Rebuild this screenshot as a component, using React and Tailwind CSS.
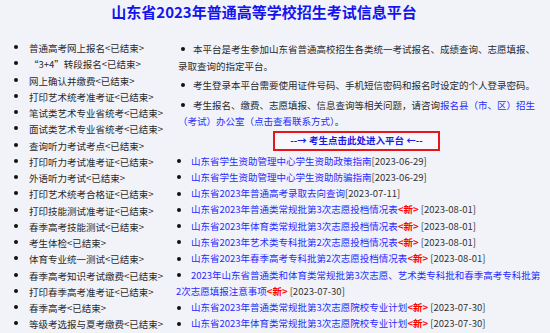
const leftItems = [
  '普通高考网上报名',
  '“3+4”转段报名',
  '网上确认并缴费',
  '打印艺术统考准考证',
  '笔试类艺术专业省统考',
  '面试类艺术专业省统考',
  '查询听力考试考点',
  '打印听力考试准考证',
  '外语听力考试',
  '打印艺术统考合格证',
  '打印技能测试准考证',
  '春季高考技能测试',
  '考生体检',
  '体育专业统一测试',
  '春季高考知识考试缴费',
  '打印春季高考准考证',
  '春季高考',
  '等级考选报与夏考缴费',
]

const news = [
  { title: '山东省学生资助管理中心学生资助政策指南', date: '2023-06-29' },
  { title: '山东省学生资助管理中心学生资助防骗指南', date: '2023-06-29' },
  { title: '山东省2023年普通高考录取去向查询', date: '2023-07-11' },
  { title: '山东省2023年普通类常规批第3次志愿投档情况表', date: '2023-08-01', isNew: true },
  { title: '山东省2023年体育类常规批第3次志愿投档情况表', date: '2023-08-01', isNew: true },
  { title: '山东省2023年艺术类专科批第2次志愿投档情况表', date: '2023-08-01', isNew: true },
  { title: '山东省2023年春季高考专科批第2次志愿投档情况表', date: '2023-08-01', isNew: true },
  { title: '2023年山东省普通类和体育类常规批第3次志愿、艺术类专科批和春季高考专科批第2次志愿填报注意事项', date: '2023-07-30', isNew: true },
  { title: '山东省2023年普通类常规批第3次志愿院校专业计划', date: '2023-07-30', isNew: true },
  { title: '山东省2023年体育类常规批第3次志愿院校专业计划', date: '2023-07-30', isNew: true },
]

function Dot() {
  return <span className="inline-block w-[4px] h-[4px] rounded-full bg-[#111] align-middle mb-[2px]" />
}

export default function App() {
  return (
    <div className="w-[550px] h-[333px] overflow-hidden bg-[#f2f3f9] text-[9.5px] text-[#2a2a2a] font-['Noto_Sans_CJK_SC',sans-serif]">
      <h1 className="pr-[22px] pt-[1px] text-center text-[15px] leading-[22px] font-bold text-[#1414ee]">
        山东省2023年普通高等学校招生考试信息平台
      </h1>

      <div className="flex mt-[17px]">
        <ul className="w-[176px] shrink-0">
          {leftItems.map((item) => (
            <li key={item} className="flex items-center h-[16.25px] leading-[16px]">
              <span className="w-[29px] pl-[14px] flex items-center"><Dot /></span>
              <span className="whitespace-nowrap">{item}&lt;已结束&gt;</span>
            </li>
          ))}
        </ul>

        <div className="flex-1 pr-[6px] mt-[1px]">
          <ul className="space-y-[3px] leading-[16.5px]">
            <li className="pl-[2px]">
              <span className="inline-block w-[15px] pl-[3px]"><Dot /></span>
              本平台是考生参加山东省普通高校招生各类统一考试报名、成绩查询、志愿填报、录取查询的指定平台。
            </li>
            <li className="pl-[2px]">
              <span className="inline-block w-[15px] pl-[3px]"><Dot /></span>
              考生登录本平台需要使用证件号码、手机短信密码和报名时设定的个人登录密码。
            </li>
            <li className="pl-[2px]">
              <span className="inline-block w-[15px] pl-[3px]"><Dot /></span>
              考生报名、缴费、志愿填报、信息查询等相关问题，请咨询
              <a className="text-[#2b2bff]">报名县（市、区）招生（考试）办公室（点击查看联系方式）</a>。
            </li>
          </ul>

          <div className="w-[167px] ml-[97px] mt-[1px] h-[20px] border-2 border-[#e8141a] bg-[#f8f8fc] flex items-center justify-center font-bold text-[#1a1ae6] text-[9.5px]">
            --→ 考生点击此处进入平台 ←--
          </div>

          <ul className="mt-[2px] leading-[16.3px]">
            {news.map((n) => (
              <li key={n.title}>
                <span className="inline-block w-[15px] pl-[1px]"><Dot /></span>
                <a className="text-[#2b2bff]">{n.title}</a>
                {n.isNew && <span className="text-[#ff0000] font-bold">&lt;新&gt;</span>}
                {n.isNew && ' '}
                <span className="text-[#333]">[{n.date}]</span>
              </li>
            ))}
          </ul>
        </div>
      </div>
    </div>
  )
}
